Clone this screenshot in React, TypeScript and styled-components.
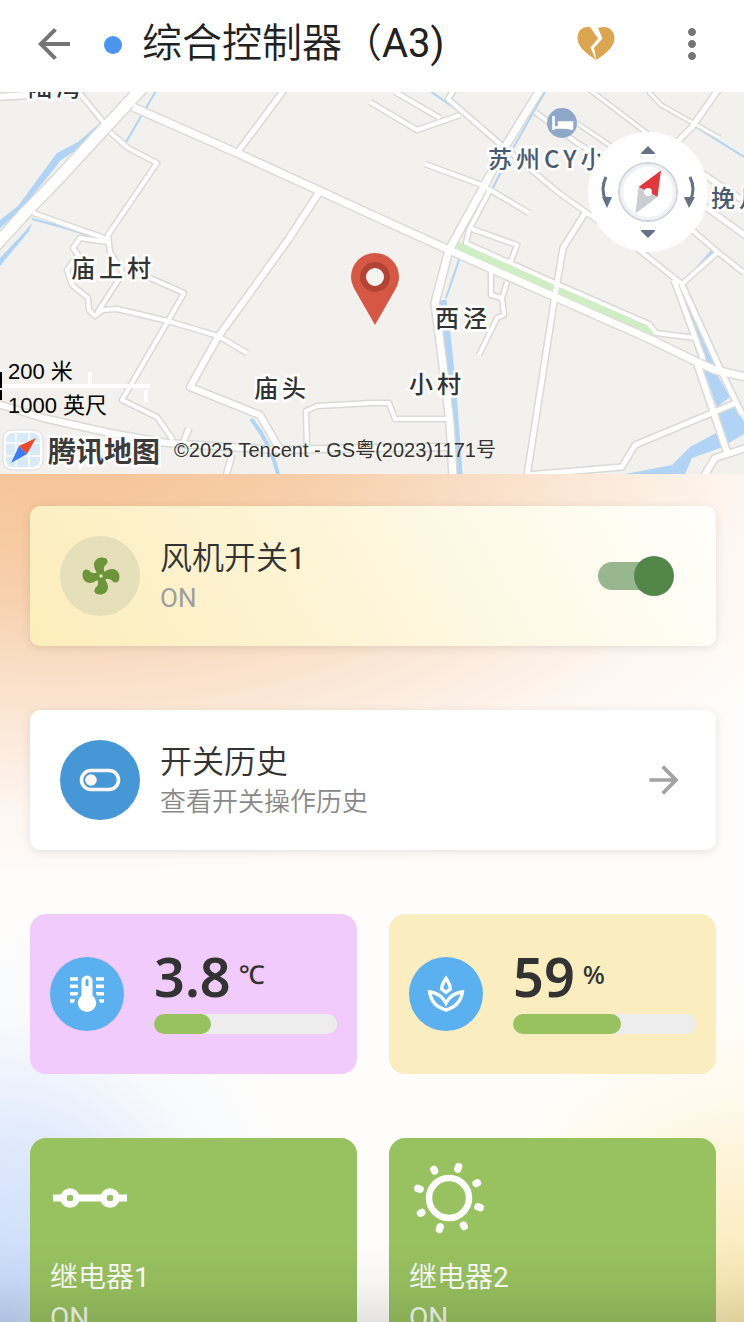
import React, { useState } from "react";
import styled, { createGlobalStyle } from "styled-components";
import { MdArrowBack, MdArrowForward, MdMoreVert } from "react-icons/md";

const GlobalStyle = createGlobalStyle`
  * { box-sizing: border-box; }
  html, body, #root { height: 100%; }
  body {
    margin: 0;
    overflow: hidden;
    font-family: Roboto, "Noto Sans CJK SC DemiLight", "Noto Sans CJK SC", sans-serif;
    color: #333;
    background: #fff;
  }
`;

const Screen = styled.div`
  position: relative;
  height: 100vh;
  display: flex;
  flex-direction: column;
  overflow: hidden;
`;

const TopBar = styled.header`
  flex: none;
  height: 92px;
  padding: 0 28px 4px 30px;
  display: flex;
  align-items: center;
  background: #fff;
`;

const IconButton = styled.button`
  width: 48px;
  height: 48px;
  padding: 0;
  border: 0;
  display: grid;
  place-items: center;
  background: none;
  color: #757575;
  cursor: pointer;
`;

const StatusDot = styled.span`
  width: 18px;
  height: 18px;
  margin: 2px 20px 0 26px;
  border-radius: 50%;
  background: #4b95ee;
`;

const Title = styled.h1`
  flex: 1;
  margin: 0;
  font-size: 40px;
  line-height: 48px;
  font-weight: 400;
  color: #212121;
  white-space: nowrap;
`;

const Actions = styled.div`
  display: flex;
  gap: 48px;
`;

const Scroller = styled.main`
  flex: 1;
  min-height: 0;
  overflow-y: auto;
  scrollbar-width: none;
  background:
    radial-gradient(ellipse 860px 450px at 60px 360px, #f6c294 0%, rgba(246, 202, 162, 0.9) 30%, rgba(249, 220, 194, 0.7) 58%, rgba(253, 238, 228, 0.45) 80%, rgba(255, 252, 248, 0) 100%),
    radial-gradient(ellipse 340px 420px at 0 100%, #c3d7fa 0%, rgba(214, 227, 252, 0.8) 40%, rgba(240, 245, 255, 0.4) 72%, rgba(255, 255, 255, 0) 100%),
    radial-gradient(ellipse 300px 340px at 100% 100%, #f9e6ac 0%, rgba(252, 236, 192, 0.8) 35%, rgba(255, 247, 226, 0.5) 68%, rgba(255, 255, 255, 0) 100%),
    #fefdfb;
`;

const MapBox = styled.section`
  position: relative;
  height: 382px;
  overflow: hidden;
  background: #f2f1ee;
`;

const MapArt = styled.svg`
  display: block;
  width: 100%;
  height: 100%;
`;

const Place = styled.span<{ $x: number; $y: number; $tone?: string }>`
  position: absolute;
  left: ${(p) => p.$x}px;
  top: ${(p) => p.$y}px;
  font: 500 24px/32px "Noto Sans CJK SC", sans-serif;
  letter-spacing: 4px;
  white-space: nowrap;
  color: ${(p) => p.$tone ?? "#303336"};
  -webkit-text-stroke: 5px #fff;
  paint-order: stroke fill;
`;

const ScaleText = styled.span<{ $y: number }>`
  position: absolute;
  left: 8px;
  top: ${(p) => p.$y}px;
  font: 22px/28px "Liberation Sans", "Noto Sans CJK SC", sans-serif;
  color: #000;
`;

const MapCredit = styled.div`
  position: absolute;
  left: 2px;
  bottom: 3px;
  display: flex;
  align-items: center;
  white-space: nowrap;
  font: 20px/24px "Liberation Sans", "Noto Sans CJK SC", sans-serif;
  color: #333;
`;

const Brand = styled.strong`
  margin: 0 14px 0 4px;
  font: 700 28px/40px "Noto Sans CJK SC", sans-serif;
  color: #3b3b3b;
  -webkit-text-stroke: 5px #fff;
  paint-order: stroke fill;
`;

const CompassButton = styled.button`
  position: absolute;
  right: 36px;
  top: 40px;
  width: 120px;
  height: 120px;
  padding: 0;
  border: 0;
  background: none;
  cursor: pointer;
`;

const Content = styled.div`
  display: flex;
  flex-direction: column;
  gap: 64px;
  padding: 32px 28px 64px 30px;
`;

const Card = styled.section<{ $warm?: boolean }>`
  min-height: 140px;
  padding: 28px 30px;
  display: flex;
  align-items: center;
  gap: 20px;
  border-radius: 10px;
  color: inherit;
  text-decoration: none;
  background: ${(p) => (p.$warm ? "linear-gradient(60deg, #fcedbb 0%, #fdf4d4 40%, #fefae9 70%, #fffefb 100%)" : "#fff")};
  box-shadow: 0 2px 10px rgba(0, 0, 0, 0.1);
`;

const Disc = styled.span<{ $size: number; $color: string }>`
  flex: none;
  width: ${(p) => p.$size}px;
  height: ${(p) => p.$size}px;
  display: grid;
  place-items: center;
  border-radius: 50%;
  background: ${(p) => p.$color};
`;

const CardText = styled.div`
  flex: 1;
  display: flex;
  flex-direction: column;
  padding-top: 4px;
`;

const CardTitle = styled.label`
  font-size: 32px;
  line-height: 40px;
`;

const CardNote = styled.span<{ $tone?: string }>`
  font-size: 26px;
  line-height: 40px;
  color: ${(p) => p.$tone ?? "#888"};
`;

const Switch = styled.input`
  appearance: none;
  flex: none;
  position: relative;
  width: 76px;
  height: 40px;
  margin: 0 12px 0 0;
  cursor: pointer;
  &::before {
    content: "";
    position: absolute;
    inset: 6px 2px 6px 0;
    border-radius: 14px;
    background: #c4c4c4;
  }
  &::after {
    content: "";
    position: absolute;
    left: 0;
    width: 40px;
    height: 40px;
    border-radius: 50%;
    background: #f2f2f2;
  }
  &:checked::before { background: #98b68f; }
  &:checked::after { left: 36px; background: #53874a; }
`;

const Pair = styled.div`
  display: grid;
  grid-template-columns: 1fr 1fr;
  gap: 32px;
`;

const Gauge = styled.section<{ $color: string }>`
  height: 160px;
  padding: 0 20px;
  display: flex;
  align-items: center;
  gap: 30px;
  border-radius: 16px;
  background: ${(p) => p.$color};
`;

const GaugeBody = styled.div`
  flex: 1;
  display: flex;
  flex-direction: column;
  gap: 16px;
`;

const Reading = styled.div`
  height: 44px;
  display: flex;
  align-items: flex-start;
  gap: 8px;
  font-family: "Noto Sans", sans-serif;
`;

const Value = styled.span`
  font-size: 54px;
  line-height: 44px;
  font-weight: 600;
`;

const Unit = styled.span`
  font-size: 26px;
  line-height: 40px;
  font-weight: 500;
`;

const Track = styled.div`
  height: 20px;
  border-radius: 10px;
  background: #ededed;
`;

const Fill = styled.div`
  height: 100%;
  border-radius: 10px;
  background: #98c15f;
`;

const Relay = styled.button`
  padding: 20px;
  border: 0;
  display: flex;
  flex-direction: column;
  align-items: flex-start;
  border-radius: 16px;
  background: #98c15f;
  color: #fff;
  font: inherit;
  text-align: left;
  cursor: pointer;
`;

const RelayName = styled.span`
  margin-top: 20px;
  font-size: 28px;
  line-height: 40px;
`;

const RelayState = styled.span`
  font-size: 28px;
  line-height: 40px;
  opacity: 0.9;
`;

const BottomShade = styled.div`
  position: absolute;
  inset: auto 0 0 0;
  height: 80px;
  pointer-events: none;
  background: linear-gradient(rgba(0, 0, 0, 0), rgba(0, 0, 0, 0.03) 50%, rgba(0, 0, 0, 0.1));
`;

const roads: [string, number][] = [
  ["M142 88L105 128L57 180L25 213L-6 247", 11],
  ["M133 107L237 153L320 191L372 215L449 250L555 297L652 340L699 363L715 370L750 378", 7],
  ["M237 153L284 90", 5],
  ["M320 191L288 240L218 337L190 387L260 415L280 450", 6],
  ["M77 90L105 124M110 132L128 148L157 163L108 235L110 252L123 273L97 313", 4],
  ["M33 213L107 239L107 242L80 238L73 248L78 255L67 270L72 285L88 298L89 310L95 316L103 310L117 309L168 321L218 336L247 353", 4],
  ["M150 278L184 293L168 321L122 400L157 417L173 440", 4],
  ["M-2 404L43 418L110 433L167 443L277 450L372 448L449 447", 6],
  ["M307 448L306 411L317 406L372 403L389 403L395 419L447 419", 4],
  ["M189 428L183 443M232 455L226 476", 5],
  ["M540 90L505 147L482 190L449 250L435 303L444 373L450 423L453 476", 7],
  ["M370 102L417 130L460 115M395 92L440 118M454 90L448 99L499 143L559 193L639 250L682 284L717 253", 4],
  ["M535 112L577 143L622 170L692 230L719 253L744 273", 4],
  ["M577 123L612 147M590 90L648 134M649 92L661 105L720 138", 3],
  ["M718 90L692 127L672 147M700 172L746 202M700 203L746 236", 5],
  ["M425 164L482 185L529 213", 4],
  ["M491 188L469 230L466 243L555 283L649 324L656 333L695 338", 4],
  ["M472 229L517 245L510 264", 4],
  ["M585 213L563 248L555 295L527 476", 5],
  ["M491 272L491 295L502 298M507 282L502 298L504 315L497 318L479 355", 4],
  ["M674 280L703 359M682 285L722 373L742 414", 5],
  ["M697 363L728 455", 6],
  ["M738 402L719 410L635 445L622 467L527 475", 5],
  ["M746 448L715 458L704 476M-2 97L27 95", 6],
];

const RegionMap = () => (
  <MapArt viewBox="0 92 744 382" preserveAspectRatio="xMinYMin slice" aria-hidden="true">
    <g fill="#b0d3f6">
      <path d="M100 123L78 142L57 153L18 206L0 220V228L22 209L61 160L84 145L102 127Z" />
      <path d="M32 223L20 237L0 258V266L29 231Z" />
      <path d="M444 345L450 372L456 420L462 474H455L449 400L440 300Z" />
      <path d="M704 370L716 373L730 397L717 407ZM718 412L735 405L744 422V434L720 448L692 458L685 474H625L672 465L690 447L720 431Z" />
      <path d="M683 282L713 248L718 252L684 285ZM679 287L707 362L715 364Z" />
    </g>
    <g fill="none" stroke="#b0d3f6" strokeWidth="2">
      <path d="M80 96L102 124L128 146M156 91L143 113L126 142M32 219L58 226L105 240M430 91L460 112L499 145M647 91L661 105L744 157M546 90L512 150L464 245L446 298" />
      <path d="M251 419Q270 442 278 474" strokeWidth="4" />
      <path d="M443 300L452 380L459 474" strokeWidth="7" />
    </g>
    <g fill="none" stroke="#d9d9d6" strokeLinejoin="round">
      {roads.map(([d, w]) => <path key={d} d={d} strokeWidth={w + 3} />)}
    </g>
    <path d="M459 242L651 328L655 336L455 249Z" fill="#cfeec4" />
    <g fill="none" stroke="#fff" strokeLinejoin="round">
      {roads.map(([d, w]) => <path key={d} d={d} strokeWidth={w} />)}
    </g>
    <g fill="#fff">
      <path d="M0 384H150V388H0ZM88 372H92V384H88ZM144 390H148V402H144Z" />
      <path d="M0 372H2V388H0ZM0 390H2V400H0Z" fill="#000" />
    </g>
    <circle cx="562" cy="123" r="15" fill="#8fa8c9" />
    <path d="M553.500 116V130M553 127.500H572M572 130V122.500H559V127" fill="#fff" stroke="#fff" strokeWidth="2.500" />
    <path d="M375 325L355 290Q351 283 351 277A24 24 0 1 1 399 277Q399 283 395 290Z" fill="#d75745" />
    <circle cx="375" cy="277" r="12" fill="#f5f3f0" stroke="#b34334" strokeWidth="6" />
  </MapArt>
);

const Compass = () => (
  <svg width="120" height="120" viewBox="0 0 120 120" aria-hidden="true">
    <circle cx="60" cy="60" r="60" fill="#fff" />
    <circle cx="60" cy="60" r="29" fill="#fff" stroke="#d3d5de" strokeWidth="2" />
    <circle cx="60" cy="60" r="26.500" fill="none" stroke="#f0f1f4" strokeWidth="3" />
    <path d="M73 38.500L50.500 55L60 60L69.500 65Z" fill="#e0393d" />
    <path d="M47.500 81.500L50.500 55L60 60L69.500 65Z" fill="#cbcdd1" />
    <circle cx="60" cy="60" r="4" fill="#fff" />
    <g fill="#667185">
      <path d="M60 14L67 21V22H53V21ZM60 106L67 99V98H53V99Z" />
      <path d="M14 65H24L19 76ZM96 65H107L101 76Z" />
    </g>
    <path d="M18 45Q12 57 18 69M102 45Q108 57 102 69" fill="none" stroke="#667185" strokeWidth="3" />
  </svg>
);

const BrokenHeart = () => (
  <svg width="48" height="48" viewBox="0 0 48 48" fill="#dca650" aria-hidden="true">
    <path d="M18.500 7.400C10.500 5.500 5.500 11 5.500 18C5.500 26 13 33 24 40L18.500 27.500L26 18.500Z" />
    <path d="M26 8C35 4.500 42.500 10 42.500 18C42.500 26 35 33 24.500 40L22 28L30.500 18.500Z" />
  </svg>
);

const Fan = () => (
  <svg width="40" height="40" viewBox="-20 -20 40 40" fill="#6c953b" aria-hidden="true">
    {[0, 90, 180, 270].map((a) => (
      <path key={a} transform={`translate(1 0) rotate(${a})`} d="M-4 0C-3 -4 -7 -6 -7 -11C-7 -16 -3 -18.500 1 -18.500C6 -18.500 7.500 -15.500 6 -12.500C4.500 -10.500 2.500 -10 3 -6L4 0Z" />
    ))}
    <circle cx="1" r="1.800" fill="#e5dfba" />
  </svg>
);

const TogglePill = () => (
  <svg width="44" height="24" viewBox="0 0 44 24" aria-hidden="true">
    <rect x="3.500" y="2.500" width="37" height="19" rx="9.500" fill="none" stroke="#fff6f6" strokeWidth="3.600" />
    <circle cx="13" cy="12" r="5.800" fill="#fff6f6" />
  </svg>
);

const Thermometer = () => (
  <svg width="40" height="40" viewBox="0 0 40 40" fill="#fff" aria-hidden="true">
    <path d="M3 3.300h8v3.500h-8zM3 10.600h8v3.500h-8zM3 18h8v1.500l-1 2h-7zM3 25.200h5l-1 3.500h-4zM29 3.300h8v3.500h-8zM29 10.600h8v3.500h-8zM37 18h-8v1.500l1 2h7zM37 25.200h-5l1 3.500h4z" />
    <path fillRule="evenodd" d="M14.500 7A5.500 5.500 0 0 1 25.500 7V21.500A9.200 9.200 0 1 1 14.500 21.500ZM18.500 6.500V12H21.500V6.500A1.500 1.500 0 0 0 18.500 6.500Z" />
  </svg>
);

const Lotus = () => (
  <svg width="40" height="40" viewBox="0 0 40 40" fill="none" stroke="#fff" strokeWidth="3.400" aria-hidden="true">
    <path d="M20 4.500Q15.800 10.500 15.600 15L20 18.300L24.400 15Q24.200 10.500 20 4.500Z" />
    <path d="M20 29Q15 19.500 3.600 17.800Q5.500 32 20 36Q34.500 32 36.400 17.800Q25 19.500 20 29Z" />
  </svg>
);

const RelayLink = () => (
  <svg width="80" height="80" viewBox="0 0 80 80" fill="none" stroke="#fff" aria-hidden="true">
    <path d="M3 40H12M28 40H52M68 40H77" strokeWidth="7" />
    <circle cx="20" cy="40" r="6.500" strokeWidth="6.500" />
    <circle cx="60" cy="40" r="6.500" strokeWidth="6.500" />
  </svg>
);

const Sun = () => (
  <svg width="80" height="80" viewBox="-40 -40 80 80" fill="#fff" aria-hidden="true">
    <circle r="20" fill="none" stroke="#fff" strokeWidth="6.500" />
    {[17, 62, 107, 152, 197, 242, 287, 332].map((a, i) => (
      <rect key={a} x="-3.700" y={i % 2 ? -36 : -36.500} width="7.400" height={i % 2 ? 9 : 10} rx="3.700" transform={`rotate(${a})`} />
    ))}
  </svg>
);

type GaugeProps = { name: string; color: string; value: string; unit: string; percent: number; icon: React.ReactNode };

const GaugeCard = ({ name, color, value, unit, percent, icon }: GaugeProps) => (
  <Gauge $color={color}>
    <Disc $size={74} $color="#5bb0f0">{icon}</Disc>
    <GaugeBody>
      <Reading>
        <Value>{value}</Value>
        <Unit>{unit}</Unit>
      </Reading>
      <Track role="progressbar" aria-label={name} aria-valuenow={percent}>
        <Fill style={{ width: `${percent}%` }} />
      </Track>
    </GaugeBody>
  </Gauge>
);

const RelayCard = ({ name, icon }: { name: string; icon: React.ReactNode }) => (
  <Relay type="button">
    {icon}
    <RelayName>{name}</RelayName>
    <RelayState>ON</RelayState>
  </Relay>
);

export default function App() {
  const [on, setOn] = useState(true);
  return (
    <Screen>
      <GlobalStyle />
      <TopBar>
        <IconButton aria-label="返回"><MdArrowBack size={48} /></IconButton>
        <StatusDot />
        <Title>{"综合控制器\uFF08A3)"}</Title>
        <Actions>
          <IconButton aria-label="取消收藏"><BrokenHeart /></IconButton>
          <IconButton aria-label="更多"><MdMoreVert size={48} /></IconButton>
        </Actions>
      </TopBar>
      <Scroller>
        <MapBox>
          <RegionMap />
          <Place $x={28} $y={-22}>陆湾</Place>
          <Place $x={71} $y={159}>庙上村</Place>
          <Place $x={254} $y={279}>庙头</Place>
          <Place $x={435} $y={209}>西泾</Place>
          <Place $x={409} $y={275}>小村</Place>
          <Place $x={488} $y={50} $tone="#475a72">苏州CY小</Place>
          <Place $x={711} $y={89} $tone="#475a72">挽月</Place>
          <ScaleText $y={266}>200 米</ScaleText>
          <ScaleText $y={300}>1000 英尺</ScaleText>
          <MapCredit>
            <svg width="42" height="42" viewBox="0 0 42 42" aria-hidden="true">
              <rect x="1" y="1" width="40" height="40" rx="9" fill="#fff" stroke="#d5dbe2" />
              <rect x="4" y="4" width="34" height="34" rx="7" fill="#d8e9f8" />
              <path d="M4 14H38M4 27H38M14 4V38M27 4V38" stroke="#f3f9ff" strokeWidth="2" />
              <path d="M9 34L17 17L25 25Z" fill="#3c7cf5" />
              <path d="M34 9L17 17L25 25Z" fill="#eb4a2d" />
            </svg>
            <Brand>腾讯地图</Brand>
            <span>©2025 Tencent - GS粤(2023)1171号</span>
          </MapCredit>
          <CompassButton aria-label="指南针"><Compass /></CompassButton>
        </MapBox>
        <Content>
          <Card $warm>
            <Disc $size={80} $color="#e5dfba"><Fan /></Disc>
            <CardText>
              <CardTitle htmlFor="fan">风机开关1</CardTitle>
              <CardNote $tone="#9e9e9e">{on ? "ON" : "OFF"}</CardNote>
            </CardText>
            <Switch id="fan" type="checkbox" role="switch" checked={on} onChange={(e) => setOn(e.target.checked)} />
          </Card>
          <Card as="a" href="#history">
            <Disc $size={80} $color="#4597d5"><TogglePill /></Disc>
            <CardText>
              <CardTitle as="span">开关历史</CardTitle>
              <CardNote>查看开关操作历史</CardNote>
            </CardText>
            <MdArrowForward size={44} color="#a3a3a3" />
          </Card>
          <Pair>
            <GaugeCard name="温度" color="#f1cbfb" value="3.8" unit="℃" percent={31} icon={<Thermometer />} />
            <GaugeCard name="湿度" color="#faedbf" value="59" unit="%" percent={59} icon={<Lotus />} />
          </Pair>
          <Pair>
            <RelayCard name="继电器1" icon={<RelayLink />} />
            <RelayCard name="继电器2" icon={<Sun />} />
          </Pair>
        </Content>
      </Scroller>
      <BottomShade />
    </Screen>
  );
}
